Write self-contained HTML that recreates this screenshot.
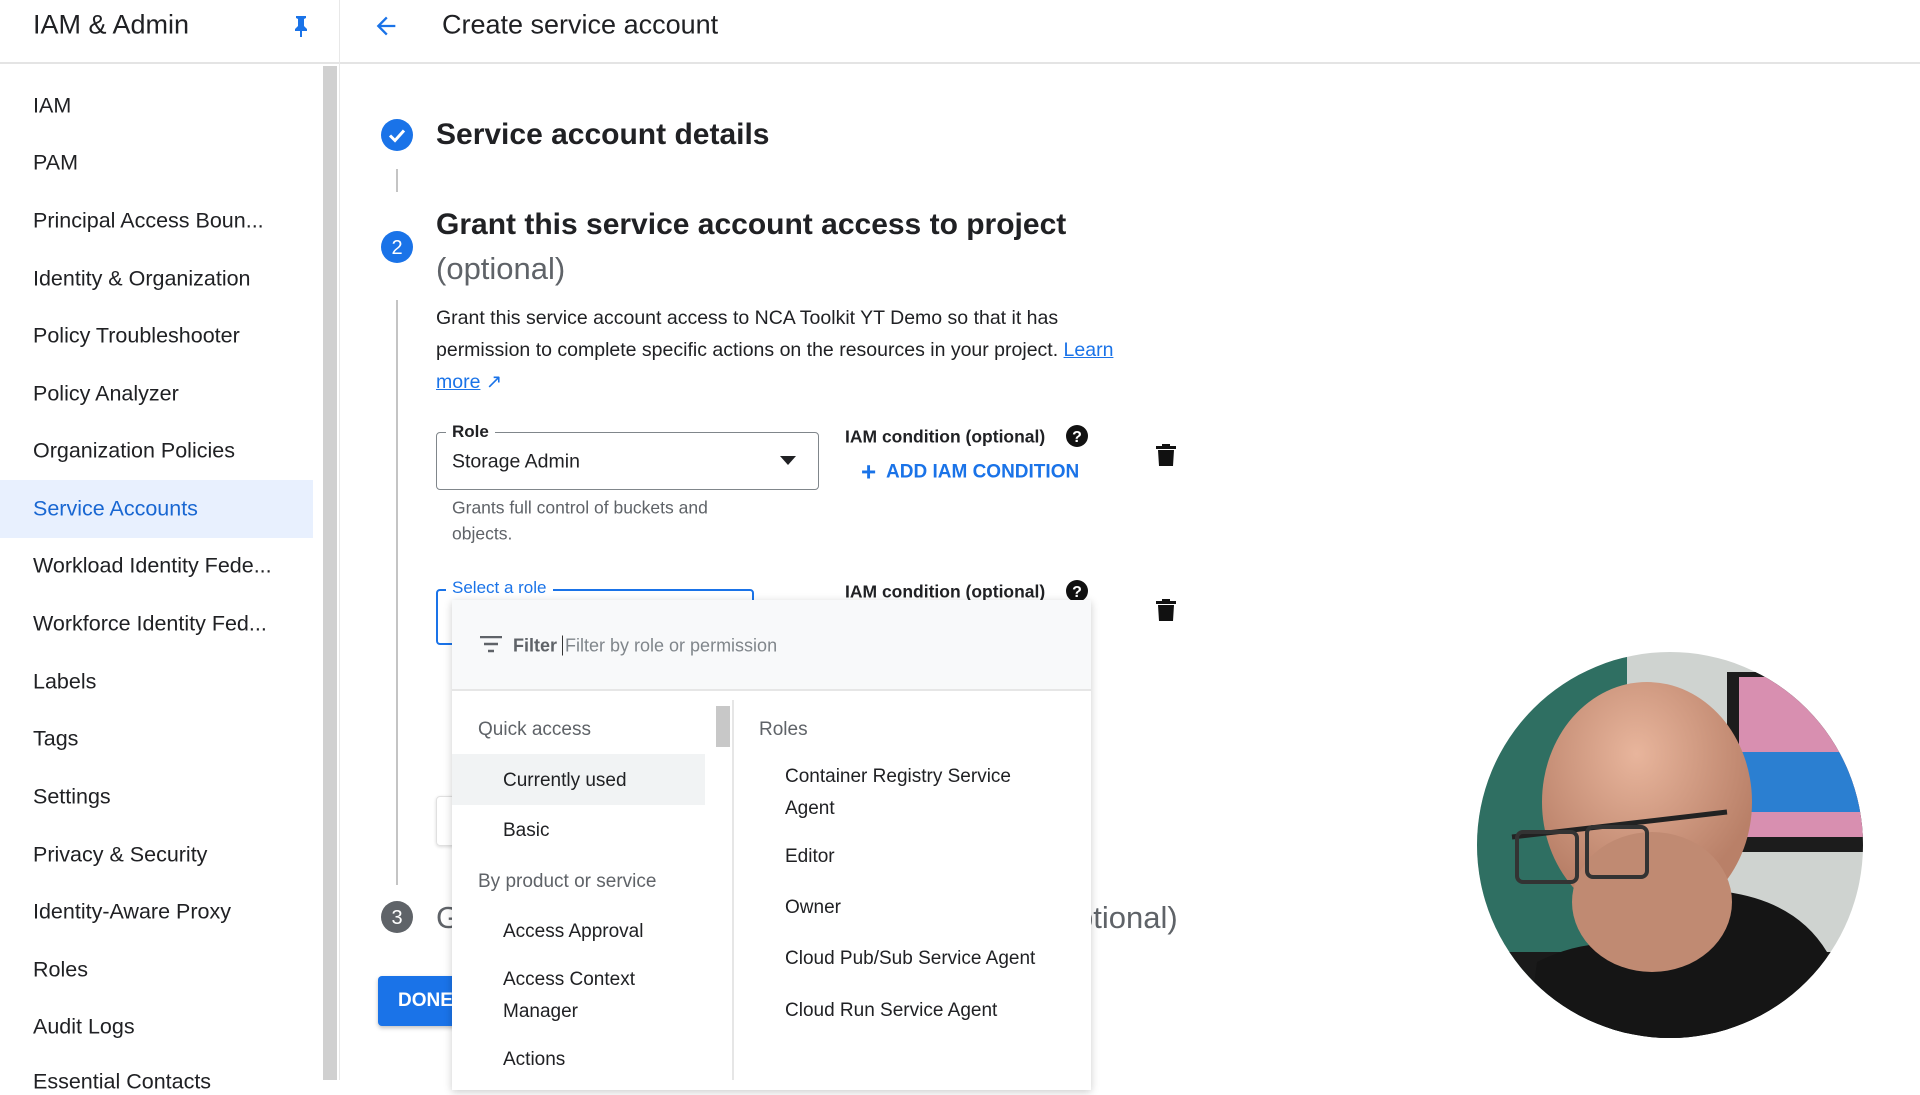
<!DOCTYPE html>
<html><head><meta charset="utf-8"><style>
*{margin:0;padding:0;box-sizing:border-box}
body{width:1920px;height:1080px;overflow:hidden;background:#fff;font-family:"Liberation Sans",Arial,sans-serif;color:#202124;position:relative}
.a{position:absolute;white-space:nowrap}
.nav{position:absolute;left:33px;font-size:21.5px;color:#202124;transform:translateY(-50%)}
.m{transform:translateY(-50%)}
</style></head><body>
<!-- header -->
<div class="a" style="left:0;top:0;width:1920px;height:64px;border-bottom:2px solid #e4e4e4"></div>
<div class="a" style="left:339px;top:0;width:1px;height:64px;background:#e8e8e8"></div>
<div class="a m" style="left:33px;top:25px;font-size:27px">IAM &amp; Admin</div>
<svg class="a" style="left:290px;top:14px" width="22" height="24" viewBox="0 0 22 24"><path d="M6 2h10v2l-2 1v7l3 3v2h-5v6h-2v-6H5v-2l3-3V5L6 4z" fill="#1a73e8"/></svg>
<svg class="a" style="left:372px;top:12px" width="28" height="28" viewBox="0 0 24 24"><path d="M20 11H7.8l5.6-5.6L12 4l-8 8 8 8 1.4-1.4L7.8 13H20z" fill="#1a73e8"/></svg>
<div class="a m" style="left:442px;top:25px;font-size:27px">Create service account</div>
<!-- sidebar -->
<div class="a" style="left:323px;top:66px;width:14px;height:1014px;background:#d0d0d0"></div>
<div class="a" style="left:339px;top:64px;width:1px;height:1016px;background:#e8e8e8"></div>
<div class="a" style="left:0;top:480px;width:313px;height:58px;background:#e8f0fe"></div>
<div class="nav" style="top:106px">IAM</div>
<div class="nav" style="top:163px">PAM</div>
<div class="nav" style="top:221px">Principal Access Boun...</div>
<div class="nav" style="top:279px">Identity &amp; Organization</div>
<div class="nav" style="top:336px">Policy Troubleshooter</div>
<div class="nav" style="top:394px">Policy Analyzer</div>
<div class="nav" style="top:451px">Organization Policies</div>
<div class="nav" style="top:509px;color:#1967d2">Service Accounts</div>
<div class="nav" style="top:566px">Workload Identity Fede...</div>
<div class="nav" style="top:624px">Workforce Identity Fed...</div>
<div class="nav" style="top:682px">Labels</div>
<div class="nav" style="top:739px">Tags</div>
<div class="nav" style="top:797px">Settings</div>
<div class="nav" style="top:855px">Privacy &amp; Security</div>
<div class="nav" style="top:912px">Identity-Aware Proxy</div>
<div class="nav" style="top:970px">Roles</div>
<div class="nav" style="top:1027px">Audit Logs</div>
<div class="nav" style="top:1082px">Essential Contacts</div>
<!-- steps -->
<svg class="a" style="left:381px;top:119px" width="32" height="32"><circle cx="16" cy="16" r="16" fill="#1a73e8"/><path d="M9 16.5l5 5 9-10" stroke="#fff" stroke-width="3" fill="none"/></svg>
<div class="a m" style="left:436px;top:135px;font-size:30px;font-weight:bold;color:#202124">Service account details</div>
<div class="a" style="left:396px;top:169px;width:2px;height:23px;background:#c4c4c4"></div>
<svg class="a" style="left:381px;top:231px" width="32" height="32"><circle cx="16" cy="16" r="16" fill="#1a73e8"/><text x="16" y="23" text-anchor="middle" font-size="20" fill="#fff" font-family="Liberation Sans">2</text></svg>
<div class="a m" style="left:436px;top:225px;font-size:30px;font-weight:bold">Grant this service account access to project</div>
<div class="a m" style="left:436px;top:269px;font-size:31px;color:#5f6368">(optional)</div>
<div class="a" style="left:396px;top:300px;width:2px;height:585px;background:#c4c4c4"></div>
<div class="a" style="left:436px;top:302px;font-size:19.5px;line-height:32px">Grant this service account access to NCA Toolkit YT Demo so that it has<br>permission to complete specific actions on the resources in your project. <span style="color:#1a73e8;text-decoration:underline">Learn</span><br><span style="color:#1a73e8;text-decoration:underline">more</span> <span style="color:#1a73e8">&#8599;</span></div>
<!-- role field -->
<div class="a" style="left:436px;top:432px;width:383px;height:58px;border:1.5px solid #80868b;border-radius:4px"></div>
<div class="a m" style="left:446px;top:432px;background:#fff;padding:0 6px;font-size:17px;font-weight:bold">Role</div>
<div class="a m" style="left:452px;top:462px;font-size:19.5px">Storage Admin</div>
<svg class="a" style="left:780px;top:456px" width="16" height="10"><path d="M0 0h16L8 9z" fill="#202124"/></svg>
<div class="a m" style="left:452px;top:508px;font-size:17.5px;color:#5f6368">Grants full control of buckets and</div>
<div class="a m" style="left:452px;top:534px;font-size:17.5px;color:#5f6368">objects.</div>
<div class="a m" style="left:845px;top:437px;font-size:17.5px;font-weight:bold;color:#202124">IAM condition (optional)</div>
<svg class="a" style="left:1066px;top:425px" width="22" height="22"><circle cx="11" cy="11" r="11" fill="#111"/><text x="11" y="17" text-anchor="middle" font-size="16" font-weight="bold" fill="#fff" font-family="Liberation Sans">?</text></svg>
<div class="a m" style="left:861px;top:472px;font-size:19px;font-weight:bold;color:#1a73e8"><span style="font-size:26px;vertical-align:-3px">+</span>&nbsp; ADD IAM CONDITION</div>
<svg class="a" style="left:1156px;top:444px" width="20" height="22"><path d="M6 0h8v2h6v3H0V2h6zM2 6h16l-1 16H3z" fill="#111"/></svg>
<!-- select a role -->
<div class="a" style="left:436px;top:589px;width:318px;height:56px;border:2.5px solid #1a73e8;border-radius:4px"></div>
<div class="a m" style="left:446px;top:588px;background:#fff;padding:0 6px;font-size:17px;color:#1a73e8">Select a role</div>
<div class="a m" style="left:845px;top:592px;font-size:17.5px;font-weight:bold">IAM condition (optional)</div>
<svg class="a" style="left:1066px;top:580px" width="22" height="22"><circle cx="11" cy="11" r="11" fill="#111"/><text x="11" y="17" text-anchor="middle" font-size="16" font-weight="bold" fill="#fff" font-family="Liberation Sans">?</text></svg>
<svg class="a" style="left:1156px;top:599px" width="20" height="22"><path d="M6 0h8v2h6v3H0V2h6zM2 6h16l-1 16H3z" fill="#111"/></svg>
<div class="a" style="left:436px;top:796px;width:20px;height:50px;border:1px solid #e0e0e0;border-radius:4px;box-shadow:0 1px 3px rgba(0,0,0,.15)"></div>
<!-- step 3 -->
<svg class="a" style="left:381px;top:901px" width="32" height="32"><circle cx="16" cy="16" r="16" fill="#5f6368"/><text x="16" y="23" text-anchor="middle" font-size="20" fill="#fff" font-family="Liberation Sans">3</text></svg>
<div class="a m" style="left:436px;top:918px;font-size:31px;color:#5f6368"><span style="display:inline-block;width:640px">G</span>ptional)</div>
<div class="a" style="left:378px;top:976px;width:90px;height:50px;background:#1a73e8;border-radius:4px;box-shadow:0 2px 4px rgba(0,0,0,.25)"></div>
<div class="a m" style="left:398px;top:1001px;font-size:19px;font-weight:bold;color:#fff">DONE</div>
<!-- dropdown -->
<div class="a" style="left:452px;top:600px;width:639px;height:490px;background:#fff;box-shadow:0 2px 8px rgba(0,0,0,.2)"></div>
<div class="a" style="left:452px;top:600px;width:639px;height:91px;background:#f8f9fa;border-bottom:2px solid #e6e6e6"></div>
<svg class="a" style="left:480px;top:636px" width="22" height="18"><path d="M0 1h22M4 8h14M8 15h6" stroke="#5f6368" stroke-width="2.5"/></svg>
<div class="a m" style="left:513px;top:646px;font-size:18px;font-weight:bold;color:#5f6368">Filter <span style="font-weight:normal;color:#80868b;border-left:1.5px solid #333;padding-left:2px">Filter by role or permission</span></div>
<div class="a" style="left:732px;top:700px;width:1.5px;height:380px;background:#e6e6e6"></div>
<div class="a" style="left:716px;top:706px;width:14px;height:41px;background:#c8c8c8"></div>
<div class="a" style="left:452px;top:754px;width:253px;height:51px;background:#f1f3f4"></div>
<div class="a m" style="left:478px;top:730px;font-size:19px;color:#5f6368">Quick access</div>
<div class="a m" style="left:503px;top:781px;font-size:19px">Currently used</div>
<div class="a m" style="left:503px;top:831px;font-size:19px">Basic</div>
<div class="a m" style="left:478px;top:882px;font-size:19px;color:#5f6368">By product or service</div>
<div class="a m" style="left:503px;top:932px;font-size:19px">Access Approval</div>
<div class="a m" style="left:503px;top:980px;font-size:19px">Access Context</div>
<div class="a m" style="left:503px;top:1012px;font-size:19px">Manager</div>
<div class="a m" style="left:503px;top:1060px;font-size:19px">Actions</div>
<div class="a m" style="left:759px;top:730px;font-size:19px;color:#5f6368">Roles</div>
<div class="a m" style="left:785px;top:777px;font-size:19px">Container Registry Service</div>
<div class="a m" style="left:785px;top:809px;font-size:19px">Agent</div>
<div class="a m" style="left:785px;top:857px;font-size:19px">Editor</div>
<div class="a m" style="left:785px;top:908px;font-size:19px">Owner</div>
<div class="a m" style="left:785px;top:959px;font-size:19px">Cloud Pub/Sub Service Agent</div>
<div class="a m" style="left:785px;top:1011px;font-size:19px">Cloud Run Service Agent</div>
<!-- webcam -->
<svg class="a" style="left:1477px;top:652px" width="386" height="386" viewBox="0 0 386 386">
<defs><clipPath id="c"><circle cx="193" cy="193" r="193"/></clipPath>
<radialGradient id="h" cx="45%" cy="30%" r="60%"><stop offset="0" stop-color="#e8b59c"/><stop offset="1" stop-color="#b98068"/></radialGradient></defs>
<g clip-path="url(#c)">
<rect width="386" height="386" fill="#cfd3d0"/>
<rect x="0" y="0" width="150" height="386" fill="#2f6f62"/>
<rect x="250" y="20" width="140" height="180" fill="#1c1c1c"/>
<rect x="262" y="25" width="130" height="160" fill="#d88fb0"/>
<rect x="262" y="100" width="130" height="60" fill="#2b7fd1"/>
<rect x="0" y="300" width="386" height="86" fill="#1a1a1a"/>
<path d="M50 386 L60 310 Q120 280 170 300 L250 240 Q320 250 350 300 L360 386Z" fill="#151515"/>
<ellipse cx="170" cy="150" rx="105" ry="120" fill="url(#h)"/>
<ellipse cx="175" cy="250" rx="80" ry="70" fill="#c08a72"/>
<path d="M35 185 L250 160" stroke="#222" stroke-width="5"/>
<rect x="40" y="180" width="60" height="50" rx="6" fill="none" stroke="#333" stroke-width="4"/>
<rect x="110" y="175" width="60" height="50" rx="6" fill="none" stroke="#333" stroke-width="4"/>
</g></svg>
</body></html>
